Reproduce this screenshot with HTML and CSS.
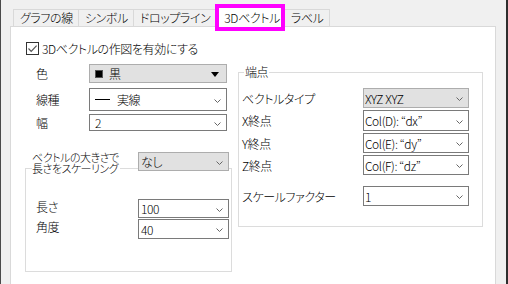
FILE: index.html
```html
<!DOCTYPE html>
<html lang="ja">

<head>
    <meta charset="UTF-8">
    <title>3Dベクトル</title>
    <link rel="stylesheet" href="styles.css">
</head>

<body>
    <div class="dialog">
        <div class="tabs">
            <div class="tab">グラフの線</div>
            <div class="tab">シンボル</div>
            <div class="tab">ドロップライン</div>
            <div class="tab active">3Dベクトル</div>
            <div class="tab">ラベル</div>
        </div>

        <div class="panel">
            <label class="check">
                <span class="box">
                    <svg width="11" height="11" viewBox="0 0 11 11">
                        <path d="M1.5 5.5 L4.2 8.3 L9.6 2.6" stroke="#555" stroke-width="1.2" fill="none" />
                    </svg>
                </span>
                3Dベクトルの作図を有効にする
            </label>

            <div class="columns">
                <div class="col-left">
                    <div class="row r-color">
                        <span class="lbl">色</span>
                        <div class="combo gray wide">
                            <span class="swatch"></span>
                            <span class="val">黒</span>
                            <svg class="arrow" width="8" height="5" viewBox="0 0 8 5">
                                <path d="M0 0 H8 L4 5 Z" fill="#000" />
                            </svg>
                        </div>
                    </div>
                    <div class="row r-type">
                        <span class="lbl">線種</span>
                        <div class="combo wide">
                            <span class="line-sample"></span>
                            <span class="val">実線</span>
                            <svg class="chev" width="7" height="4" viewBox="0 0 7 4">
                                <path d="M0.5 0.5 L3.5 3.5 L6.5 0.5" stroke="#666" fill="none" />
                            </svg>
                        </div>
                    </div>
                    <div class="row r-width">
                        <span class="lbl">幅</span>
                        <div class="combo wide">
                            <span class="val">2</span>
                            <svg class="chev" width="7" height="4" viewBox="0 0 7 4">
                                <path d="M0.5 0.5 L3.5 3.5 L6.5 0.5" stroke="#666" fill="none" />
                            </svg>
                        </div>
                    </div>

                    <div class="scale-head">
                        <span class="scale-lbl">ベクトルの大きさで<br>長さをスケーリング</span>
                        <div class="combo gray short">
                            <span class="val">なし</span>
                            <svg class="chev" width="7" height="4" viewBox="0 0 7 4">
                                <path d="M0.5 0.5 L3.5 3.5 L6.5 0.5" stroke="#666" fill="none" />
                            </svg>
                        </div>
                    </div>
                    <div class="group">
                        <div class="row r-len">
                            <span class="lbl top">長さ</span>
                            <div class="combo short">
                                <span class="val">100</span>
                                <svg class="chev" width="7" height="4" viewBox="0 0 7 4">
                                    <path d="M0.5 0.5 L3.5 3.5 L6.5 0.5" stroke="#666" fill="none" />
                                </svg>
                            </div>
                        </div>
                        <div class="row r-ang">
                            <span class="lbl top">角度</span>
                            <div class="combo short">
                                <span class="val">40</span>
                                <svg class="chev" width="7" height="4" viewBox="0 0 7 4">
                                    <path d="M0.5 0.5 L3.5 3.5 L6.5 0.5" stroke="#666" fill="none" />
                                </svg>
                            </div>
                        </div>
                    </div>
                </div>

                <fieldset class="endpoints">
                    <legend>端点</legend>
                    <div class="row r-vtype">
                        <span class="lbl wide-lbl">ベクトルタイプ</span>
                        <div class="combo gray mid">
                            <span class="val">XYZ XYZ</span>
                            <svg class="chev" width="7" height="4" viewBox="0 0 7 4">
                                <path d="M0.5 0.5 L3.5 3.5 L6.5 0.5" stroke="#666" fill="none" />
                            </svg>
                        </div>
                    </div>
                    <div class="row r-x">
                        <span class="lbl wide-lbl">X終点</span>
                        <div class="combo mid">
                            <span class="val">Col(D): “dx”</span>
                            <svg class="chev" width="7" height="4" viewBox="0 0 7 4">
                                <path d="M0.5 0.5 L3.5 3.5 L6.5 0.5" stroke="#666" fill="none" />
                            </svg>
                        </div>
                    </div>
                    <div class="row r-y">
                        <span class="lbl wide-lbl">Y終点</span>
                        <div class="combo mid">
                            <span class="val">Col(E): “dy”</span>
                            <svg class="chev" width="7" height="4" viewBox="0 0 7 4">
                                <path d="M0.5 0.5 L3.5 3.5 L6.5 0.5" stroke="#666" fill="none" />
                            </svg>
                        </div>
                    </div>
                    <div class="row r-z">
                        <span class="lbl wide-lbl">Z終点</span>
                        <div class="combo mid">
                            <span class="val">Col(F): “dz”</span>
                            <svg class="chev" width="7" height="4" viewBox="0 0 7 4">
                                <path d="M0.5 0.5 L3.5 3.5 L6.5 0.5" stroke="#666" fill="none" />
                            </svg>
                        </div>
                    </div>
                    <div class="row r-factor">
                        <span class="lbl wide-lbl">スケールファクター</span>
                        <div class="combo mid">
                            <span class="val">1</span>
                            <svg class="chev" width="7" height="4" viewBox="0 0 7 4">
                                <path d="M0.5 0.5 L3.5 3.5 L6.5 0.5" stroke="#666" fill="none" />
                            </svg>
                        </div>
                    </div>
                </fieldset>
            </div>
        </div>
    </div>
</body>

</html>
```

FILE: styles.css
```css
body {
    margin: 0;
    height: 284px;
    overflow: hidden;
    box-sizing: border-box;
    background-color: #f0f0f0;
    border-left: 1px solid #4a4a4a;
    border-right: 2px solid #2e2e2e;
    font-family: "Noto Sans CJK JP", "Noto Sans", sans-serif;
    font-size: 12px;
    font-weight: 300;
    font-feature-settings: "palt";
    letter-spacing: -0.4px;
    color: #000;
}

.dialog {
    padding-left: 9px;
}

/* tab strip */
.tabs {
    display: flex;
    align-items: flex-end;
    height: 26px;
    padding-left: 3px;
}

.tab {
    height: 17px;
    box-sizing: border-box;
    padding: 0 5px 0 6px;
    margin-left: -1px;
    border: 1px solid #d9d9d9;
    border-bottom: none;
    background-color: #f0f0f0;
    line-height: 16px;
    white-space: nowrap;
}

.tab:first-child {
    margin-left: 0;
}

.tab.active {
    position: relative;
    z-index: 1;
    height: 27px;
    margin-bottom: -5px;
    padding: 0 1px 0 5px;
    border: 4px solid #ff00ff;
    background-color: #fff;
    line-height: 19px;
}

.panel {
    width: 486px;
    height: 258px;
    box-sizing: border-box;
    padding-left: 14px;
    background-color: #fff;
    border: 1px solid #d9d9d9;
    border-bottom: none;
}

/* checkbox */
.check {
    display: flex;
    align-items: center;
    height: 14px;
    margin: 14px 0 0 1px;
}

.box {
    display: flex;
    align-items: center;
    justify-content: center;
    width: 13px;
    height: 13px;
    box-sizing: border-box;
    margin-right: 3px;
    border: 1px solid #333;
    background-color: #fff;
}

.columns {
    display: flex;
    align-items: flex-start;
    gap: 6px;
    margin-top: 9px;
}

.col-left {
    width: 207px;
    box-sizing: border-box;
    padding: 0 3px 0 11px;
}

.row {
    display: flex;
}

.lbl {
    align-self: center;
    width: 53px;
    flex-shrink: 0;
    white-space: nowrap;
}

.lbl.top {
    align-self: flex-start;
    margin-top: -1px;
}

.wide-lbl {
    width: 121px;
}

/* combo boxes */
.combo {
    display: flex;
    align-items: center;
    box-sizing: border-box;
    padding: 0 5px 0 5px;
    background-color: #fff;
    border: 1px solid #7a7a7a;
    white-space: nowrap;
}

.combo.gray {
    background-color: #e1e1e1;
    border-color: #adadad;
}

.combo.wide {
    width: 138px;
}

.combo.short {
    width: 91px;
    margin-left: auto;
    padding-left: 2px;
}

.combo.mid {
    width: 106px;
    padding-left: 1px;
}

.chev,
.arrow {
    margin-left: auto;
    margin-top: 2px;
}

.arrow {
    margin-right: 2px;
}

.swatch {
    width: 8px;
    height: 8px;
    box-sizing: border-box;
    margin: 1px 6px 0 0;
    background-color: #000;
    border: 1px solid #555;
}

.line-sample {
    width: 15px;
    height: 1px;
    margin-right: 7px;
    background-color: #000;
}

.r-color {
    height: 19px;
}

.r-type {
    height: 23px;
    margin-top: 5px;
}

.r-width {
    height: 17px;
    margin-top: 3px;
}

/* scaling group */
.scale-head {
    position: relative;
    z-index: 1;
    display: flex;
    align-items: flex-start;
    margin-top: 21px;
    margin-left: -4px;
}

.scale-lbl {
    padding-right: 1px;
    background-color: #fff;
    font-size: 11px;
    line-height: 11px;
    letter-spacing: -0.5px;
    white-space: nowrap;
}

.scale-head .combo {
    height: 19px;
}

.group {
    height: 104px;
    box-sizing: border-box;
    margin: -6px -3px 0 -11px;
    padding: 30px 2px 0 10px;
    border: 1px solid #dcdcdc;
}

.r-len {
    height: 19px;
}

.r-ang {
    height: 20px;
    margin-top: 1px;
}

/* end point group */
.endpoints {
    width: 245px;
    min-width: 0;
    box-sizing: border-box;
    margin: 2px 0 0;
    padding: 0 0 20px 3px;
    border: 1px solid #dcdcdc;
}

.endpoints legend {
    margin-left: 2px;
    padding: 0 1px;
    line-height: 12px;
}

.r-vtype {
    height: 20px;
    margin-top: 10px;
}

.r-x {
    height: 21px;
    margin-top: 2px;
}

.r-y {
    height: 20px;
    margin-top: 2px;
}

.r-z {
    height: 20px;
    margin-top: 2px;
}

.r-factor {
    height: 20px;
    margin-top: 11px;
}
```
